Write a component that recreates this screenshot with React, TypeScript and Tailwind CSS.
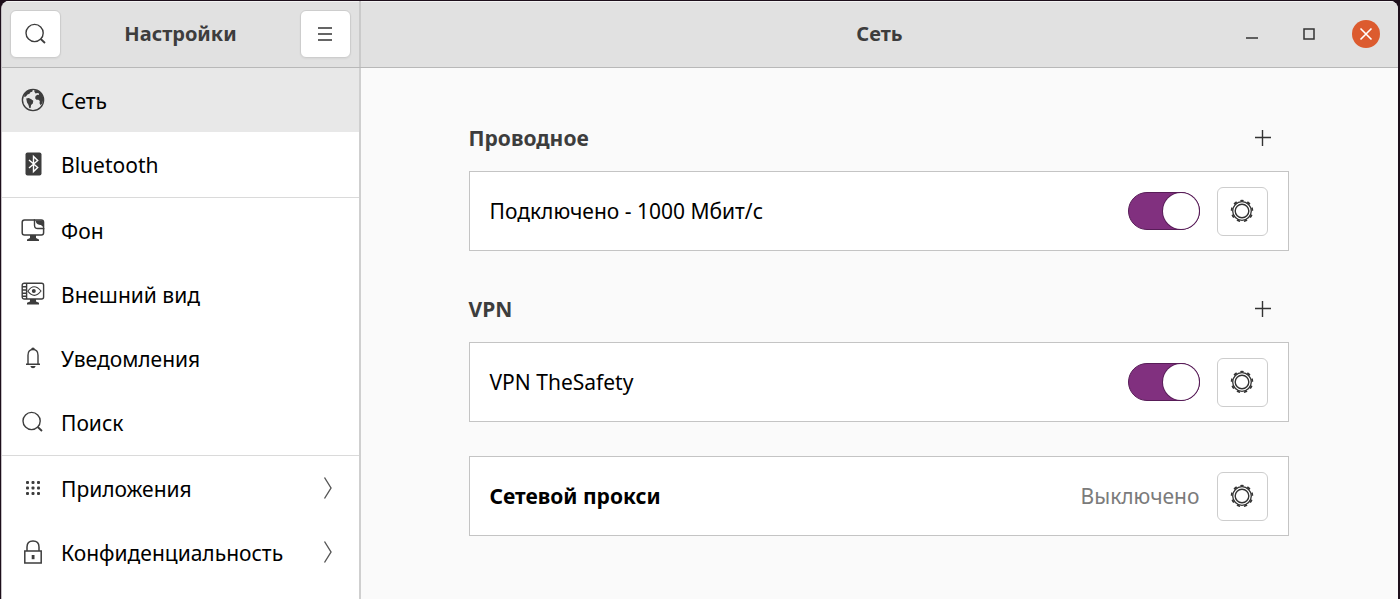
import type { ReactNode } from "react";

const ink = "#3d3d3d";

function SearchIcon() {
  return (
    <svg width="24" height="24" viewBox="0 0 24 24" fill="none" stroke={ink} strokeWidth="1.4" aria-hidden="true">
      <circle cx="10.600" cy="11" r="8.6" />
      <path d="M16.700 17l4.300 4" strokeWidth="1.8" />
    </svg>
  );
}

function GlobeIcon() {
  return (
    <svg width="24" height="24" viewBox="0 0 24 24" fill="none" aria-hidden="true">
      <circle cx="12" cy="12" r="10.6" stroke={ink} strokeWidth="1.4" />
      <path
        fill={ink}
        d="M3.200 6.500C4.800 4 7 2.300 10 1.500l1.800.8-.6 1.500-1.800.5-.9 1.400-2 .8-1.600 1.900-1.700.6zM5.200 10.500l2.600-.5 2.500 1.300 2 1.400-.5 2.700-1.700 1.500-.5 3-1.200.3-1-3.400-1.400-2.400zM13 2.500l2.500-.6c3.200 1.200 5.500 3.700 6.400 6.800l.3 3.600-1.200 3.500-1.400 1.500-1.100-2 .3-2.300-1.400-1.300-2 .1-1.300-1.600.5-2.300 1.800-1.200 1.400.3.300-1.400-1.900-.6-1.600.5-.9-1.300z"
      />
    </svg>
  );
}

function BluetoothIcon() {
  return (
    <svg width="24" height="24" viewBox="0 0 24 24" fill="none" aria-hidden="true">
      <rect x="4.500" y="0.500" width="16" height="23" rx="2" fill={ink} />
      <path d="M8 8l8.700 7.500-4.200 4V4.500l4.200 4L8 16" stroke="#fff" strokeWidth="1.400" />
    </svg>
  );
}

function BackgroundIcon() {
  return (
    <svg width="24" height="24" viewBox="0 0 24 24" fill="none" aria-hidden="true">
      <path d="M14 2H3.500Q1.200 2 1.200 4.300v10.400Q1.200 17 3.500 17h16.800q2.300 0 2.300-2.300V10" stroke={ink} strokeWidth="1.500" />
      <path d="M13.500 2h6.800q2.300 0 2.300 2.300v6.200h-5.800q-3.300 0-3.300-3.300z" stroke={ink} strokeWidth="1.400" />
      <path d="M14.500 2.500h6q1.700 0 1.700 1.700v5.600q-.6-2.600-4-3-3-.6-3.700-4.300z" fill={ink} />
      <path d="M9 17h6v3l3 1.400V23H6v-1.600L9 20z" fill={ink} />
    </svg>
  );
}

function AppearanceIcon() {
  return (
    <svg width="24" height="24" viewBox="0 0 24 24" fill="none" stroke={ink} strokeWidth="1.400" aria-hidden="true">
      <rect x="1.200" y="1.200" width="21.400" height="15.800" rx="2" />
      <path d="M5.600 1v16M1 4.800h4.600M1 8h4.600M1 11.200h4.600M1 14.300h4.600" />
      <path d="M6.800 9.200q6-8.800 13.200-.2q-6.600 8.600-13.200.2z" strokeWidth="1.100" />
      <circle cx="12.800" cy="9" r="2" fill={ink} stroke="none" />
      <path d="M9 17h6v2.500l3 1.200v1.800H6v-1.800l3-1.200z" fill={ink} stroke="none" />
    </svg>
  );
}

function BellIcon() {
  return (
    <svg width="24" height="24" viewBox="0 0 24 24" fill="none" stroke={ink} strokeWidth="1.400" aria-hidden="true">
      <path d="M5 18.300h14M7 18V9.300Q7 3.500 12 3.500T17 9.300V18" />
      <path d="M10.800 3.500Q10.800 2.200 12 2.200t1.200 1.300" />
      <path d="M9.300 20h5.400Q14 22.200 12 22.200T9.300 20z" fill={ink} stroke="none" />
    </svg>
  );
}

function AppsIcon() {
  const steps = [5, 10.5, 16];
  return (
    <svg width="24" height="24" viewBox="0 0 24 24" fill={ink} aria-hidden="true">
      {steps.map((y) => steps.map((x) => <rect key={`${x}-${y}`} x={x} y={y} width="3" height="3" rx="1" />))}
    </svg>
  );
}

function LockIcon() {
  return (
    <svg width="24" height="24" viewBox="0 0 24 24" fill="none" stroke={ink} strokeWidth="1.500" aria-hidden="true">
      <path d="M3.800 11h16.400v12H3.800zM6 11V7Q6 1 12 1t6 6v4" />
      <rect x="10.700" y="15" width="2.800" height="4.200" fill={ink} stroke="none" />
    </svg>
  );
}

function GearIcon() {
  return (
    <svg width="24" height="24" viewBox="0 0 24 24" fill="none" stroke="#333" aria-hidden="true">
      <circle cx="12" cy="12" r="9.300" strokeWidth="1.300" />
      <circle cx="12" cy="12" r="6.800" strokeWidth="1.400" />
      <circle
        cx="12"
        cy="12"
        r="10.400"
        strokeWidth="1.700"
        pathLength={9}
        strokeDasharray="0.46 0.54"
        strokeDashoffset="0.230"
        transform="rotate(-90 12 12)"
      />
    </svg>
  );
}

function Chevron() {
  return (
    <svg width="10" height="24" viewBox="0 0 10 24" fill="none" stroke="#555" strokeWidth="1.400" aria-hidden="true">
      <path d="M1.500 1.500L8 12 1.500 22.500" />
    </svg>
  );
}

type Item = { label: string; icon: ReactNode; active?: boolean; nested?: boolean };

const groups: Item[][] = [
  [
    { label: "Сеть", icon: <GlobeIcon />, active: true },
    { label: "Bluetooth", icon: <BluetoothIcon /> },
  ],
  [
    { label: "Фон", icon: <BackgroundIcon /> },
    { label: "Внешний вид", icon: <AppearanceIcon /> },
    { label: "Уведомления", icon: <BellIcon /> },
    { label: "Поиск", icon: <SearchIcon /> },
  ],
  [
    { label: "Приложения", icon: <AppsIcon />, nested: true },
    { label: "Конфиденциальность", icon: <LockIcon />, nested: true },
  ],
];

function Sidebar() {
  return (
    <nav className="w-[359px] shrink-0 border-r-2 border-[#cfcfcf] bg-white" aria-label="Настройки">
      {groups.map((group, i) => (
        <ul key={i} className="border-b border-[#dadada] pb-px last:border-b-0">
          {group.map((item) => (
            <li key={item.label}>
              <a
                href="#"
                aria-current={item.active ? "page" : undefined}
                className={`flex h-16 items-center pr-[26px] pl-[19px] text-black ${item.active ? "bg-[#e8e8e8]" : ""}`}
              >
                {item.icon}
                <span className="ml-4 flex-1 pt-0.5">{item.label}</span>
                {item.nested && <Chevron />}
              </a>
            </li>
          ))}
        </ul>
      ))}
    </nav>
  );
}

function HeaderButton({ label, children }: { label: string; children: ReactNode }) {
  return (
    <button
      type="button"
      aria-label={label}
      className="flex h-12 w-[51px] items-center justify-center rounded-md border border-[#cdcdcd] bg-white shadow-xs"
    >
      {children}
    </button>
  );
}

function Header() {
  return (
    <header className="flex h-[67px] border-b border-[#b8b8b8] bg-[#e1e1e1] text-xl font-bold text-[#3d3d3d] shadow-[inset_0_1px_0_#f3f3f3]">
      <div className="flex w-[359px] shrink-0 items-center justify-between border-r-2 border-[#cacaca] px-2">
        <HeaderButton label="Поиск">
          <SearchIcon />
        </HeaderButton>
        <h2>Настройки</h2>
        <HeaderButton label="Меню">
          <svg width="16" height="16" viewBox="0 0 16 16" stroke="#333" strokeWidth="1.500" aria-hidden="true">
            <path d="M0 2h14M0 8h14M0 14h14" />
          </svg>
        </HeaderButton>
      </div>
      <div className="grid flex-1 grid-cols-[1fr_auto_1fr] items-center px-[18px]">
        <h1 className="col-start-2">Сеть</h1>
        <div className="flex items-center gap-[29px] justify-self-end">
          <button type="button" aria-label="Свернуть" className="flex size-7 items-center justify-center">
            <svg width="14" height="14" viewBox="0 0 14 14" aria-hidden="true">
              <path d="M1 11h12" stroke="#333" strokeWidth="1.600" />
            </svg>
          </button>
          <button type="button" aria-label="Развернуть" className="flex size-7 items-center justify-center">
            <svg width="14" height="14" viewBox="0 0 14 14" aria-hidden="true">
              <path d="M2 2h10v10H2z" fill="none" stroke="#333" strokeWidth="1.500" />
            </svg>
          </button>
          <button
            type="button"
            aria-label="Закрыть"
            className="flex size-7 items-center justify-center rounded-full bg-[#dc5b2f]"
          >
            <svg width="14" height="14" viewBox="0 0 14 14" aria-hidden="true">
              <path d="M1.500 1.500l11 11M12.500 1.500l-11 11" stroke="#fff" strokeWidth="1.600" />
            </svg>
          </button>
        </div>
      </div>
    </header>
  );
}

function SectionTitle({ title }: { title: string }) {
  return (
    <div className="mb-[13px] flex h-10 items-center justify-between pr-1.5">
      <h3 className="font-bold text-[#3d3d3d]">{title}</h3>
      <button type="button" aria-label={`Добавить: ${title}`} className="flex size-10 items-center justify-center">
        <svg width="18" height="18" viewBox="0 0 18 18" aria-hidden="true">
          <path d="M1 8.500h16M8.500 1v16" stroke="#333" strokeWidth="1.400" />
        </svg>
      </button>
    </div>
  );
}

function Row({ id, label, bold, status }: { id: string; label: string; bold?: boolean; status?: string }) {
  return (
    <div className="flex h-20 items-center gap-[17px] border border-[#c4c4c4] bg-white px-5">
      {status ? (
        <>
          <span className={`flex-1 text-black ${bold ? "font-bold" : ""}`}>{label}</span>
          <span className="text-[#7b7b7b]">{status}</span>
        </>
      ) : (
        <>
          <label htmlFor={id} className="flex-1 text-black">
            {label}
          </label>
          <input
            id={id}
            type="checkbox"
            role="switch"
            defaultChecked
            className="flex h-[38px] w-[72px] appearance-none justify-start rounded-full border border-[#aaa] bg-[#ccc] before:h-9 before:w-9 before:rounded-full before:bg-white before:content-[''] checked:justify-end checked:border-[#581d58] checked:bg-[#81307f] checked:before:ring-1 checked:before:ring-[#581d58]"
          />
        </>
      )}
      <button
        type="button"
        aria-label={`Параметры: ${label}`}
        className="flex h-[49px] w-[51px] items-center justify-center rounded-md border border-[#cdcdcd] bg-white"
      >
        <GearIcon />
      </button>
    </div>
  );
}

export default function App() {
  return (
    <div className="flex min-h-screen flex-col bg-[#1d0f1b] pt-px pr-0.5 pl-px font-['Noto_Sans',sans-serif] text-[21px] leading-7">
      <div className="flex flex-1 flex-col overflow-hidden rounded-t-lg border-l border-[#c4c0c4] bg-[#fafafa]">
        <Header />
        <div className="flex flex-1">
          <Sidebar />
          <main className="min-w-0 flex-1 pt-[50px] pr-[26px] pl-6">
            <div className="mx-auto max-w-[820px]">
              <section className="mb-[38px]">
                <SectionTitle title="Проводное" />
                <Row id="wired" label="Подключено - 1000 Мбит/с" />
              </section>
              <section className="mb-[34px]">
                <SectionTitle title="VPN" />
                <Row id="vpn" label="VPN TheSafety" />
              </section>
              <Row id="proxy" label="Сетевой прокси" bold status="Выключено" />
            </div>
          </main>
        </div>
      </div>
    </div>
  );
}
